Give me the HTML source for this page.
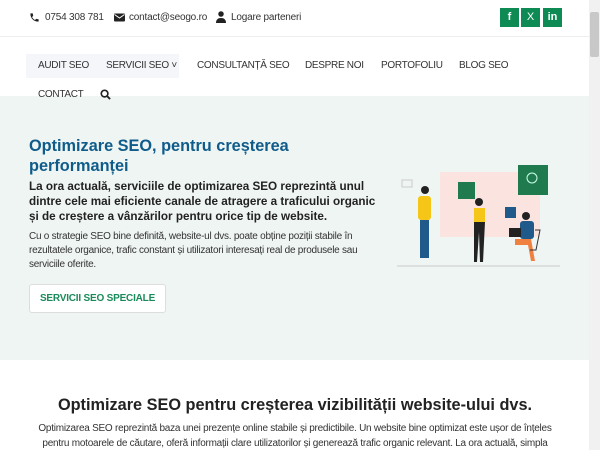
<!DOCTYPE html>
<html><head><meta charset="utf-8"><style>
*{margin:0;padding:0;box-sizing:border-box}
body{width:600px;height:450px;overflow:hidden;background:#fff;font-family:"Liberation Sans",sans-serif;position:relative;color:#222}
.abs{position:absolute}
.top{font-size:10px;color:#333;letter-spacing:-0.2px;top:12px}
.soc{top:8px;width:19px;height:19px;background:#0e8a55;color:#fff;font-size:11px;font-weight:bold;text-align:center;line-height:19px}
.nav{font-size:10px;color:#333;letter-spacing:-0.3px}
.sb{right:0;top:0;width:11px;height:450px;background:#f1f1f1}
</style></head><body>
<div class="abs" style="left:0;top:36px;width:590px;height:1px;background:#eee"></div>
<svg class="abs" style="left:29px;top:12px" width="11" height="11" viewBox="0 0 24 24"><path fill="#222" d="M6.6 10.8c1.4 2.8 3.8 5.1 6.6 6.6l2.2-2.2c.3-.3.7-.4 1-.2 1.1.4 2.3.6 3.6.6.6 0 1 .4 1 1V20c0 .6-.4 1-1 1C10.6 21 3 13.4 3 4c0-.6.4-1 1-1h3.5c.6 0 1 .4 1 1 0 1.3.2 2.5.6 3.6.1.3 0 .7-.2 1z"/></svg>
<div class="abs top" style="left:45px">0754 308 781</div>
<svg class="abs" style="left:114px;top:13px" width="11" height="9" viewBox="0 0 22 16"><rect width="22" height="16" rx="2" fill="#222"/><path d="M1 2l10 7 10-7" stroke="#fff" stroke-width="2" fill="none"/></svg>
<div class="abs top" style="left:129px">contact@seogo.ro</div>
<svg class="abs" style="left:216px;top:11px" width="10" height="12" viewBox="0 0 20 24"><circle cx="10" cy="6" r="5.5" fill="#222"/><path d="M0 24c0-7 4-10 10-10s10 3 10 10z" fill="#222"/></svg>
<div class="abs top" style="left:231px">Logare parteneri</div>
<div class="abs soc" style="left:500px">f</div>
<div class="abs soc" style="left:521px;font-weight:normal">X</div>
<div class="abs soc" style="left:543px">in</div>

<div class="abs" style="left:0;top:96px;width:590px;height:264px;background:#eff5f3"></div>
<div class="abs" style="left:26px;top:54px;width:153px;height:24px;background:#f4f6f9"></div>
<div class="abs nav" style="left:38px;top:60px">AUDIT SEO</div>
<div class="abs nav" style="left:106px;top:60px">SERVICII SEO ˅</div>
<div class="abs nav" style="left:197px;top:60px">CONSULTANȚĂ SEO</div>
<div class="abs nav" style="left:305px;top:60px">DESPRE NOI</div>
<div class="abs nav" style="left:381px;top:60px">PORTOFOLIU</div>
<div class="abs nav" style="left:459px;top:60px">BLOG SEO</div>
<div class="abs nav" style="left:38px;top:89px">CONTACT</div>
<svg class="abs" style="left:100px;top:89px" width="11" height="11" viewBox="0 0 12 12"><circle cx="5" cy="5" r="3.6" stroke="#222" stroke-width="1.8" fill="none"/><path d="M7.5 7.5l3.5 3.5" stroke="#222" stroke-width="2"/></svg>

<div class="abs" style="left:29px;top:136px;font-size:16.3px;font-weight:bold;color:#0f5c8a;line-height:20px;width:320px">Optimizare SEO, pentru creșterea performanței</div>
<div class="abs" style="left:29px;top:179px;font-size:11.7px;font-weight:bold;color:#222;line-height:15px;width:352px">La ora actuală, serviciile de optimizarea SEO reprezintă unul dintre cele mai eficiente canale de atragere a traficului organic și de creștere a vânzărilor pentru orice tip de website.</div>
<div class="abs" style="left:29px;top:230px;font-size:10px;color:#333;line-height:14px;width:340px;letter-spacing:-0.25px">Cu o strategie SEO bine definită, website-ul dvs. poate obține poziții stabile în rezultatele organice, trafic constant și utilizatori interesați real de produsele sau serviciile oferite.</div>
<div class="abs" style="left:29px;top:284px;width:137px;height:29px;background:#fff;border:1px solid #ddd;border-radius:3px;font-size:10px;font-weight:bold;color:#1a8a5a;text-align:center;line-height:27px;letter-spacing:-0.2px">SERVICII SEO SPECIALE</div>

<svg class="abs" style="left:395px;top:160px" width="170" height="110" viewBox="0 0 170 110">
<rect x="45" y="12" width="100" height="65" fill="#fbe4e0"/>
<rect x="63" y="22" width="17" height="17" fill="#1f7a4d"/>
<rect x="123" y="5" width="30" height="30" fill="#1f7a4d"/>
<circle cx="137" cy="18" r="5" stroke="#cfe" fill="none"/>
<rect x="110" y="47" width="11" height="11" fill="#1f5a8a"/>
<path d="M7 20h10v7H7z" stroke="#ccc" fill="none"/>
<line x1="2" y1="106" x2="165" y2="106" stroke="#ccc"/>
<circle cx="30" cy="30" r="4" fill="#222"/>
<rect x="23" y="36" width="13" height="24" rx="3" fill="#f5c518"/>
<rect x="25" y="60" width="9" height="38" fill="#1f5a8a"/>
<circle cx="84" cy="42" r="4" fill="#222"/>
<rect x="79" y="48" width="11" height="14" fill="#f5c518"/>
<path d="M79 62h11l-2 40h-3l-1-30-2 30h-3z" fill="#222"/>
<circle cx="131" cy="56" r="4" fill="#222"/>
<rect x="125" y="61" width="14" height="18" rx="3" fill="#1f5a8a"/>
<rect x="114" y="68" width="12" height="9" fill="#222"/>
<path d="M120 79h16l4 22h-4l-3-16h-13z" fill="#f08040"/>
<path d="M140 70l5 0-4 20h-6" stroke="#333" fill="none"/>
</svg>

<div class="abs" style="left:0;top:396px;width:590px;text-align:center;font-size:16.3px;font-weight:bold;color:#222">Optimizare SEO pentru creșterea vizibilității website-ului dvs.</div>
<div class="abs" style="left:32px;top:421px;width:526px;text-align:center;font-size:10px;color:#333;line-height:15px;letter-spacing:-0.25px">Optimizarea SEO reprezintă baza unei prezențe online stabile și predictibile. Un website bine optimizat este ușor de înțeles pentru motoarele de căutare, oferă informații clare utilizatorilor și generează trafic organic relevant. La ora actuală, simpla</div>
<div class="abs sb"><div style="margin:12px 1px 0;height:45px;background:#c8c8c8;border-radius:2px"></div></div>
</body></html>
